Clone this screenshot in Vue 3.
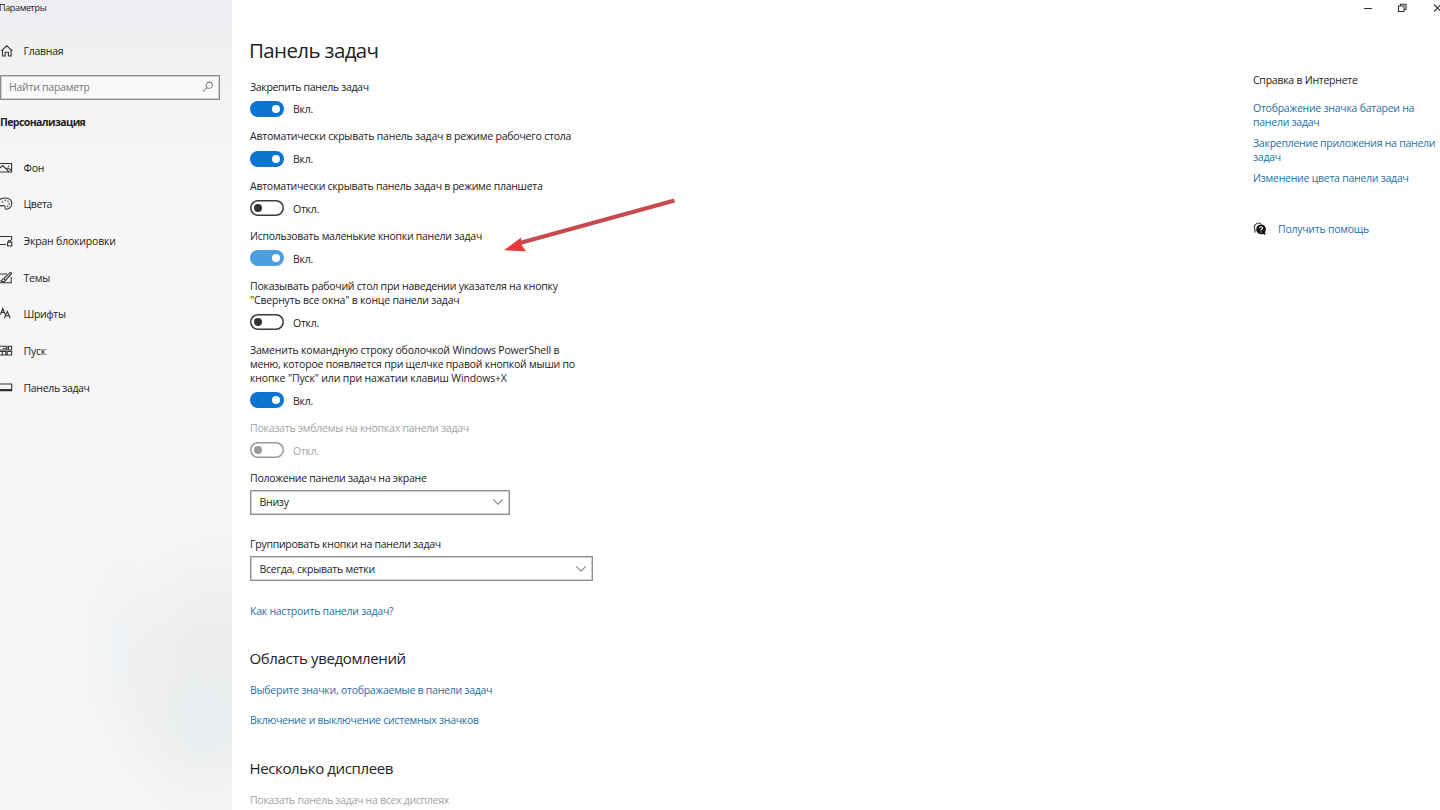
<script setup>
const nav = [
  { id: 'picture', text: 'Фон', track: -0.2 },
  { id: 'palette', text: 'Цвета', track: -0.4 },
  { id: 'lock', text: 'Экран блокировки', track: -0.18 },
  { id: 'themes', text: 'Темы', track: -0.2 },
  { id: 'fonts', text: 'Шрифты', track: -0.4 },
  { id: 'start', text: 'Пуск', track: -0.2 },
  { id: 'taskbar', text: 'Панель задач', track: -0.33 },
]

const settings = [
  { lines: [['Закрепить панель задач', -0.32]], on: true },
  { lines: [['Автоматически скрывать панель задач в режиме рабочего стола', -0.22]], on: true },
  { lines: [['Автоматически скрывать панель задач в режиме планшета', -0.26]], on: false },
  { lines: [['Использовать маленькие кнопки панели задач', -0.27]], on: true, hover: true },
  { lines: [['Показывать рабочий стол при наведении указателя на кнопку', -0.24], ['"Свернуть все окна" в конце панели задач', -0.2]], on: false },
  { lines: [['Заменить командную строку оболочкой Windows PowerShell в', -0.18], ['меню, которое появляется при щелчке правой кнопкой мыши по', -0.22], ['кнопке "Пуск" или при нажатии клавиш Windows+X', -0.15]], on: true },
  { lines: [['Показать эмблемы на кнопках панели задач', -0.24]], on: false, disabled: true },
]
</script>

<template>
  <div class="window">
    <aside class="sidebar">
      <div class="app-title">Параметры</div>
      <div class="home">
        <svg class="icon" viewBox="0 0 14 14"><path d="M1.3 6.8 6.8 1.8 12.3 6.8M2.5 5.8V12H5.2V8.2H8.4V12H11.1V5.8" /></svg>
        <span>Главная</span>
      </div>
      <div class="search">
        <span>Найти параметр</span>
        <svg viewBox="0 0 12 12"><circle cx="7.3" cy="4.2" r="3.1" /><path d="M5 6.6 1 10.6" /></svg>
      </div>
      <div class="section">Персонализация</div>
      <nav>
        <div v-for="n in nav" :key="n.id" class="nav-item">
          <svg class="icon" viewBox="0 0 14 14">
            <g v-if="n.id === 'picture'"><path d="M-1 2.5H11.6V11H-1M-1 7.6 2.8 4.6 9 10.8M6.2 8.3 8 6.9 11.6 9.8" /><circle class="dot" cx="8.8" cy="5" r=".7" /></g>
            <g v-else-if="n.id === 'palette'">
              <path d="M-1 3.2C3-.4 12 .4 11.8 6.5 11.7 10.5 8.4 12.4 6.2 12.2 4.3 12 5.6 9.7 4.6 8.8 3.4 7.8 1.6 9.4-1 8.8" />
              <circle class="dot" cx="2.6" cy="5" r=".8" /><circle class="dot" cx="5.2" cy="3.3" r=".8" /><circle class="dot" cx="8" cy="4.2" r=".8" /><circle class="dot" cx="9.2" cy="6.8" r=".8" /><circle class="dot" cx="7.7" cy="9.2" r=".8" />
            </g>
            <g v-else-if="n.id === 'lock'"><path d="M-1 2.5H11.6V6M-1 10.5H6.2M7.6 8.3H11.8V12H7.6ZM8.4 8.3V7.2Q9.7 5.6 11 7.2V8.3" /></g>
            <g v-else-if="n.id === 'themes'"><path d="M7 3H-1M11.2 6V11.8H-1M1 10C2.2 9.8 2 7.8 3.7 7.7L10.1 1.7Q11.6 1.2 11.4 2.7L5.6 9.3C5 11 3 11 1 10ZM3.7 7.7 5.6 9.3" /></g>
            <g v-else-if="n.id === 'fonts'"><path d="M.4 7.6 2.8 1.6 5.2 7.6M1.2 5.4H4.4M4.4 11.2 7.3 4.3 10.2 11.2M5.3 8.7H9.3" /></g>
            <g v-else-if="n.id === 'start'"><path d="M-1 2.3H7V6H-1M2.8 4.2H7M8.5 2.3H11.6V6H8.5ZM-1 7.5H5.8V11H-1M2.3 7.5V11M5.8 11H11.6V7.5H7.2V11" /></g>
            <g v-else><path d="M-1 3H11.7V9.6H-1M-1 8.6H11.7" /></g>
          </svg>
          <span :style="{ letterSpacing: n.track + 'px' }">{{ n.text }}</span>
        </div>
      </nav>
    </aside>

    <main>
      <h1>Панель задач</h1>
      <div v-for="(s, i) in settings" :key="i" class="setting" :class="{ disabled: s.disabled }">
        <div class="label"><div v-for="([text, track], j) in s.lines" :key="j" :style="{ letterSpacing: track + 'px' }">{{ text }}</div></div>
        <div class="control">
          <span class="toggle" :class="{ on: s.on, hover: s.hover }"><i></i></span>
          <span class="state">{{ s.on ? 'Вкл.' : 'Откл.' }}</span>
        </div>
      </div>
      <div class="field">
        <div class="label">Положение панели задач на экране</div>
        <div class="select short"><span>Внизу</span><svg viewBox="0 0 12 8"><path d="M1.2 1.4 6 6.2 10.8 1.4" /></svg></div>
      </div>
      <div class="field">
        <div class="label">Группировать кнопки на панели задач</div>
        <div class="select"><span>Всегда, скрывать метки</span><svg viewBox="0 0 12 8"><path d="M1.2 1.4 6 6.2 10.8 1.4" /></svg></div>
      </div>
      <a class="how">Как настроить панели задач?</a>
      <h2>Область уведомлений</h2>
      <a>Выберите значки, отображаемые в панели задач</a>
      <a>Включение и выключение системных значков</a>
      <h2 class="displays">Несколько дисплеев</h2>
      <div class="faded">Показать панель задач на всех дисплеях</div>
    </main>

    <aside class="help">
      <div class="caption">
        <svg viewBox="0 0 84 16"><path d="M5 8.5H13" /><path d="M39.5 6H45V11.5H39.5ZM41.5 6V4.2H47V9.5H45.2" /><path d="M75 4.5 82 11.5M82 4.5 75 11.5" /></svg>
      </div>
      <div class="help-title">Справка в Интернете</div>
      <a>Отображение значка батареи на<br>панели задач</a>
      <a>Закрепление приложения на панели<br>задач</a>
      <a>Изменение цвета панели задач</a>
      <div class="get-help">
        <svg viewBox="0 0 14 14"><path class="back" d="M1.6 10.7 2.2 8.4C-.6 4 3.7-.3 8 1.5" /><path class="front" d="M7.4 2.5C10.8 2.1 13 4.5 12.9 7.3 12.9 8.6 12.5 9.5 12 10.2L12.6 13 10 11.9C6.4 13.1 3.2 10.7 3.2 7.5 3.2 4.7 5 2.8 7.4 2.5Z" /><path class="mark" d="M6.4 6C6.6 4.3 9.6 4.4 9.5 6.1 9.4 7.2 8 7.1 8 8.5M8 9.4V10.4" /></svg>
        <a>Получить помощь</a>
      </div>
    </aside>

    <svg class="arrow" viewBox="0 0 180 60"><path class="shaft" d="M18 50.5 174.5 7.5" /><path class="head" d="M4 57.3 21.5 44.2 20.5 50.5 26 58.2Z" /></svg>
  </div>
</template>

<style>
body { overflow: hidden; background: #fff; }
</style>

<style scoped>
* { box-sizing: border-box; }
.window {
  position: relative;
  display: grid;
  grid-template-columns: 232px 1fr 187px;
  width: 1440px;
  height: 810px;
  overflow: hidden;
  background: #fff;
  color: #222;
  font: 10.5px/14px "Open Sans", "Noto Sans", sans-serif;
  letter-spacing: -0.25px;
  white-space: nowrap;
}
svg { fill: none; stroke: #333; stroke-width: 1.1; flex: none; }
.sidebar {
  overflow: hidden;
  background:
    radial-gradient(ellipse 100px 110px at 205px 715px, #e9edef 0%, rgba(234, 238, 240, 0) 100%),
    radial-gradient(ellipse 110px 130px at 215px 660px, #ecebeb 0%, rgba(237, 236, 236, 0) 100%),
    radial-gradient(ellipse 50px 110px at 125px 650px, rgba(236, 241, 245, .7) 0%, rgba(240, 243, 246, 0) 100%),
    linear-gradient(180deg, #efedf1 0, #f2f1f3 70px, #f6f5f6 125px, #f6f6f6 180px);
}
.app-title { margin: 1px 0 0 -1px; font-size: 9px; letter-spacing: -0.35px; }
.home { display: flex; align-items: center; height: 14px; margin-top: 29px; }
.icon { width: 14px; height: 14px; margin-right: 9.5px; }
.search {
  display: flex;
  align-items: center;
  justify-content: space-between;
  width: 220px;
  height: 25px;
  margin-top: 17px;
  padding: 0 5px 1px 8px;
  border: 1px solid #8c8b8f;
  box-shadow: inset 0 0 0 1px #cfced1;
  background: #f9f9fa;
  color: #777;
}
.search svg { width: 12px; height: 12px; stroke: #888; }
.section { margin-top: 15px; font-weight: 700; letter-spacing: -0.58px; }
nav { margin-top: 20.3px; }
.nav-item { display: flex; align-items: center; height: 36.7px; }
.dot { fill: #333; stroke: none; }
main { padding: 37px 0 0 18px; }
h1, h2 { margin: 0; font-weight: 400; color: #222; }
h1 { height: 42.6px; margin-left: -1px; font-size: 20.5px; line-height: 26px; letter-spacing: -0.62px; }
.label { line-height: 14.25px; }
.setting { margin-bottom: 12.5px; }
.control { display: flex; align-items: center; height: 16px; margin-top: 7px; }
.toggle {
  display: flex;
  align-items: center;
  width: 34px;
  height: 16px;
  margin-right: 9px;
  padding: 0 4px;
  border-radius: 8px;
  box-shadow: inset 0 0 0 1.5px #3a3a3a;
}
.toggle i { width: 8px; height: 8px; border-radius: 50%; background: #333; }
.toggle.on { justify-content: flex-end; box-shadow: none; background: #0a74ce; }
.toggle.on.hover { background: #4b9fdf; }
.toggle.on i { background: #fff; }
.state { position: relative; top: 0.6px; }
.disabled, .faded { color: #a3a3a3; }
.disabled .toggle { box-shadow: inset 0 0 0 1.5px #999; }
.disabled .toggle i { background: #999; }
.field { height: 66.5px; }
.select {
  display: flex;
  align-items: center;
  justify-content: space-between;
  width: 343px;
  height: 25px;
  margin-top: 5px;
  padding: 0 5px 0 8.5px;
  border: 1px solid #8e8e8e;
  box-shadow: inset 0 0 0 1px #cfcfcf;
}
.select.short { width: 260px; }
.select svg { width: 12px; height: 8px; stroke: #888; }
a { display: block; color: #1d71a6; }
main > a { height: 30px; }
h2 { height: 35px; margin-left: -0.5px; font-size: 15px; line-height: 20px; letter-spacing: -0.37px; }
.how { height: 44.5px; }
.displays { margin-top: 15px; }
.faded { letter-spacing: -0.28px; }
.caption { height: 16px; }
.caption svg { display: block; width: 84px; height: 16px; margin-left: 106px; }
.help a { margin-bottom: 7px; }
.help-title { margin: 57px 0 14px; }
.get-help { display: flex; align-items: center; height: 14px; margin-top: 37px; }
.get-help svg { width: 14px; height: 14px; margin-right: 11px; }
.get-help a { margin: 0; }
.front { fill: #111; stroke: none; }
.mark { stroke: #fff; }
.arrow { position: absolute; left: 500px; top: 193px; width: 180px; height: 60px; }
.shaft { stroke: #c74a50; stroke-width: 4; }
.head { fill: #e83a3c; stroke: none; }
</style>
